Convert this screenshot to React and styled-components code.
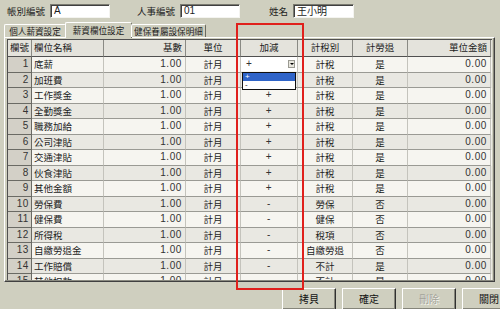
import React from "react";
import styled, { createGlobalStyle } from "styled-components";

const GlobalStyle = createGlobalStyle`
    html, body {
        margin: 0;
        padding: 0;
        background: #cfcfbf;
        overflow: hidden;
    }
    body {
        font-family: "Noto Sans CJK TC", "Liberation Sans", sans-serif;
        font-size: 9.5px;
        color: #1c1c1c;
    }
`;

const COLS = "24px 72px 82px 55px 57px 55px 55px 83px";

const Window = styled.div`
    position: relative;
    width: 500px;
    height: 309px;
    overflow: hidden;
    background: #cfcfbf;
`;

const TopBar = styled.div`
    display: flex;
    align-items: center;
    height: 21px;
`;

const Label = styled.span`
    width: ${(p) => p.$w}px;
    text-align: right;
    line-height: 14px;
`;

const Field = styled.div`
    margin-left: 5px;
    width: ${(p) => p.$w}px;
    height: 14px;
    box-sizing: border-box;
    background: #fff;
    border-top: 1px solid #7a7a70;
    border-left: 1px solid #7a7a70;
    border-right: 1px solid #f4f4f0;
    border-bottom: 1px solid #f4f4f0;
    box-shadow: inset 1px 1px 0 #404040;
    padding-left: 3px;
    line-height: 12px;
    font-family: ${(p) => (p.$cjk ? `"Noto Sans CJK TC", sans-serif` : `"Liberation Sans", sans-serif`)};
    font-size: 10px;
`;

const TabRow = styled.div`
    display: flex;
    align-items: flex-end;
    height: 16px;
    padding-left: 4px;
    position: relative;
    z-index: 1;
`;

const Tab = styled.div`
    width: ${(p) => p.$w}px;
    height: ${(p) => (p.$active ? 16 : 13)}px;
    box-sizing: border-box;
    margin-bottom: ${(p) => (p.$active ? -1 : 0)}px;
    margin-left: ${(p) => (p.$active ? -1 : 0)}px;
    margin-right: ${(p) => (p.$active ? -1 : 0)}px;
    background: #cfcfbf;
    border-top: 1px solid #fff;
    border-left: 1px solid #fff;
    border-right: 1px solid #6a6a60;
    border-radius: 2px 2px 0 0;
    text-align: center;
    font-size: 8.6px;
    line-height: ${(p) => (p.$active ? 14 : 12)}px;
    white-space: nowrap;
`;

const Panel = styled.div`
    margin: 0 5px 0 4px;
    height: 245px;
    box-sizing: border-box;
    border-top: 1px solid #fff;
    border-left: 1px solid #fff;
    border-right: 1px solid #404040;
    border-bottom: 1px solid #404040;
    box-shadow: inset -1px -1px 0 #8a8a80;
    padding: 1px 2px 2px 2px;
`;

const Grid = styled.div`
    height: 100%;
    overflow: hidden;
    border-top: 1px solid #505050;
    border-left: 1px solid #505050;
    background: #f4f3ee;
`;

const Row = styled.div`
    display: grid;
    grid-template-columns: ${COLS};
    height: ${(p) => (p.$head ? 17 : 15.5)}px;
    box-sizing: border-box;
    background: ${(p) => (p.$head ? "#e4e3dc" : p.$alt ? "#e9e8e2" : "#f6f5f0")};
`;

const Cell = styled.div`
    position: relative;
    box-sizing: border-box;
    border-right: 1px solid ${(p) => (p.$head ? "#8a8a84" : "#c4c3bc")};
    border-bottom: 1px solid ${(p) => (p.$head ? "#505050" : "#9a9a94")};
    text-align: ${(p) => p.$align || "center"};
    padding: 0 ${(p) => (p.$align === "right" ? 3 : 2)}px;
    line-height: ${(p) => (p.$head ? 15 : 14)}px;
    white-space: nowrap;
    ${(p) => p.$num && `font-family: "Liberation Sans", sans-serif; font-size: 10px; letter-spacing: 0.6px; color: #333;`}
`;

const IndexCell = styled(Cell)`
    background: #d3d0c7;
    border-right: 1px solid #6a6a64;
    border-bottom: 1px solid #6a6a64;
    text-align: right;
    padding-right: 2px;
`;

const Combo = styled.div`
    position: absolute;
    inset: 0 0 1px 0;
    background: #fff;
    display: flex;
    align-items: center;
    justify-content: space-between;
    padding: 0 2px 0 5px;
`;

const ArrowBtn = styled.span`
    width: 7px;
    height: 8px;
    box-sizing: border-box;
    background: #e8e6de;
    border: 1px solid #9a9a92;
    display: flex;
    align-items: center;
    justify-content: center;
    &::after {
        content: "";
        border-left: 2px solid transparent;
        border-right: 2px solid transparent;
        border-top: 2px solid #000;
    }
`;

const ListBox = styled.div`
    position: absolute;
    top: 15px;
    left: 1px;
    width: 52px;
    background: #fff;
    border: 1px solid #101010;
    z-index: 2;
`;

const ListItem = styled.div`
    height: 8px;
    line-height: 8px;
    font-size: 8px;
    padding-left: 2px;
    text-align: left;
    overflow: hidden;
    background: ${(p) => (p.$sel ? "#2f64c8" : "#fff")};
    color: ${(p) => (p.$sel ? "#fff" : "#222")};
`;

const ButtonBar = styled.div`
    display: flex;
    gap: 6px;
    margin-top: 6px;
    padding-left: 282px;
`;

const Button = styled.div`
    flex: none;
    width: 54px;
    height: 22px;
    box-sizing: border-box;
    border-top: 1px solid #fff;
    border-left: 1px solid #fff;
    border-right: 1px solid #303030;
    border-bottom: 1px solid #303030;
    box-shadow: inset -1px -1px 0 #85857a;
    text-align: center;
    line-height: 20px;
    font-size: 10px;
    color: ${(p) => (p.$disabled ? "#a4a49a" : "#111")};
    text-shadow: ${(p) => (p.$disabled ? "1px 1px 0 #f4f4ee" : "none")};
`;

const RedBox = styled.div`
    position: absolute;
    left: 236px;
    top: 23px;
    width: 68px;
    height: 267px;
    box-sizing: border-box;
    border: 2px solid #e0201c;
    pointer-events: none;
    z-index: 5;
`;

const rows = [
    ["底薪", "+", "計稅", "是"],
    ["加班費", "+", "計稅", "是"],
    ["工作獎金", "+", "計稅", "是"],
    ["全勤獎金", "+", "計稅", "是"],
    ["職務加給", "+", "計稅", "是"],
    ["公司津貼", "+", "計稅", "是"],
    ["交通津貼", "+", "計稅", "是"],
    ["伙食津貼", "+", "計稅", "是"],
    ["其他金額", "+", "計稅", "是"],
    ["勞保費", "-", "勞保", "否"],
    ["健保費", "-", "健保", "否"],
    ["所得稅", "-", "稅項", "否"],
    ["自繳勞退金", "-", "自繳勞退", "否"],
    ["工作賠償", "-", "不計", "是"],
    ["其他扣款", "-", "不計", "是"],
];

export default function App() {
    return (
        <Window>
            <GlobalStyle />
            <TopBar>
                <Label $w={45}>帳別編號</Label>
                <Field $w={60}>A</Field>
                <Label $w={65}>人事編號</Label>
                <Field $w={60}>01</Field>
                <Label $w={48}>姓名</Label>
                <Field $w={61} $cjk>王小明</Field>
            </TopBar>
            <TabRow>
                <Tab $w={62}>個人薪資設定</Tab>
                <Tab $w={67} $active>薪資欄位設定</Tab>
                <Tab $w={75}>健保眷屬設保明細</Tab>
            </TabRow>
            <Panel>
                <Grid>
                    <Row $head>
                        <Cell $head>欄號</Cell>
                        <Cell $head $align="left">欄位名稱</Cell>
                        <Cell $head $align="right">基數</Cell>
                        <Cell $head>單位</Cell>
                        <Cell $head>加減</Cell>
                        <Cell $head>計稅別</Cell>
                        <Cell $head>計勞退</Cell>
                        <Cell $head $align="right">單位金額</Cell>
                    </Row>
                    {rows.map(([name, sign, tax, lab], i) => (
                        <Row key={name} $alt={i % 2 === 1}>
                            <IndexCell $num>{i + 1}</IndexCell>
                            <Cell $align="left">{name}</Cell>
                            <Cell $align="right" $num>1.00</Cell>
                            <Cell>計月</Cell>
                            <Cell $num>
                                {i === 0 ? (
                                    <>
                                        <Combo>
                                            <span>+</span>
                                            <ArrowBtn />
                                        </Combo>
                                        <ListBox>
                                            <ListItem $sel>+</ListItem>
                                            <ListItem>-</ListItem>
                                        </ListBox>
                                    </>
                                ) : i === 1 ? null : (
                                    sign
                                )}
                            </Cell>
                            <Cell>{tax}</Cell>
                            <Cell>{lab}</Cell>
                            <Cell $align="right" $num>0.00</Cell>
                        </Row>
                    ))}
                </Grid>
            </Panel>
            <ButtonBar>
                <Button>拷貝</Button>
                <Button>確定</Button>
                <Button $disabled>刪除</Button>
                <Button>關閉</Button>
            </ButtonBar>
            <RedBox />
        </Window>
    );
}
